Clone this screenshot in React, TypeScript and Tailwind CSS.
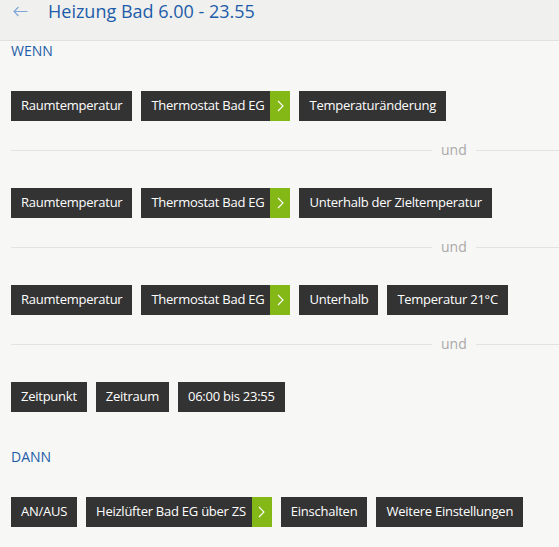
import React from 'react';

type ChipProps = { label: string; more?: boolean };

function Chip({ label, more }: ChipProps) {
  if (more) {
    return (
      <div className="flex h-[30px] bg-[#333333] text-white">
        <span className="flex items-center pl-[10px] pr-[6px] text-[13px] tracking-[-0.25px] whitespace-nowrap">{label}</span>
        <span className="flex w-[20px] items-center justify-center bg-[#84b816]">
          <svg width="7" height="12" viewBox="0 0 7 12" fill="none">
            <path d="M1 1l5 5-5 5" stroke="#ffffff" strokeWidth="1.1" />
          </svg>
        </span>
      </div>
    );
  }
  return (
    <div className="flex h-[30px] items-center bg-[#333333] px-[10px] text-[13px] tracking-[-0.25px] whitespace-nowrap text-white">
      {label}
    </div>
  );
}

function Row({ chips }: { chips: ChipProps[] }) {
  return (
    <div className="flex gap-[9px]">
      {chips.map((c, i) => (
        <Chip key={i} {...c} />
      ))}
    </div>
  );
}

function Und() {
  return (
    <div className="mt-[20px] mb-[29px] flex h-[18px] items-center">
      <div className="h-px w-[421px] flex-none bg-[#e3e3e1]" />
      <span className="px-[9px] text-[14px] leading-[18px] text-[#a9a9a9]">und</span>
      <div className="h-px flex-1 bg-[#e3e3e1]" />
    </div>
  );
}

const thermostat = [
  { label: 'Raumtemperatur' },
  { label: 'Thermostat Bad EG', more: true },
];

export default function App() {
  return (
    <div className="min-h-screen bg-[#f7f7f5] font-['Open_Sans',sans-serif]">
      <header className="flex h-[41px] items-start border-b border-[#e1e1df] bg-[#f0f0ee]">
        <svg className="mt-[6px] ml-[13px]" width="15" height="11" viewBox="0 0 15 11" fill="none">
          <path d="M14.5 5.5H1M5.5 1L1 5.5 5.5 10" stroke="#7ea6d8" strokeWidth="1.1" />
        </svg>
        <h1 className="ml-[20px] text-[18px] leading-[22px] text-[#1d5ca8]">Heizung Bad 6.00 - 23.55</h1>
      </header>

      <main className="pl-[11px]">
        <h2 className="text-[14px] leading-5 text-[#1d5ca8]">WENN</h2>

        <div className="mt-[30px]">
          <Row chips={[...thermostat, { label: 'Temperaturänderung' }]} />
          <Und />
          <Row chips={[...thermostat, { label: 'Unterhalb der Zieltemperatur' }]} />
          <Und />
          <Row chips={[...thermostat, { label: 'Unterhalb' }, { label: 'Temperatur 21°C' }]} />
          <Und />
          <Row chips={[{ label: 'Zeitpunkt' }, { label: 'Zeitraum' }, { label: '06:00 bis 23:55' }]} />
        </div>

        <h2 className="mt-[35px] text-[14px] leading-5 text-[#1d5ca8]">DANN</h2>

        <div className="mt-[30px]">
          <Row
            chips={[
              { label: 'AN/AUS' },
              { label: 'Heizlüfter Bad EG über ZS', more: true },
              { label: 'Einschalten' },
              { label: 'Weitere Einstellungen' },
            ]}
          />
        </div>
      </main>
    </div>
  );
}
